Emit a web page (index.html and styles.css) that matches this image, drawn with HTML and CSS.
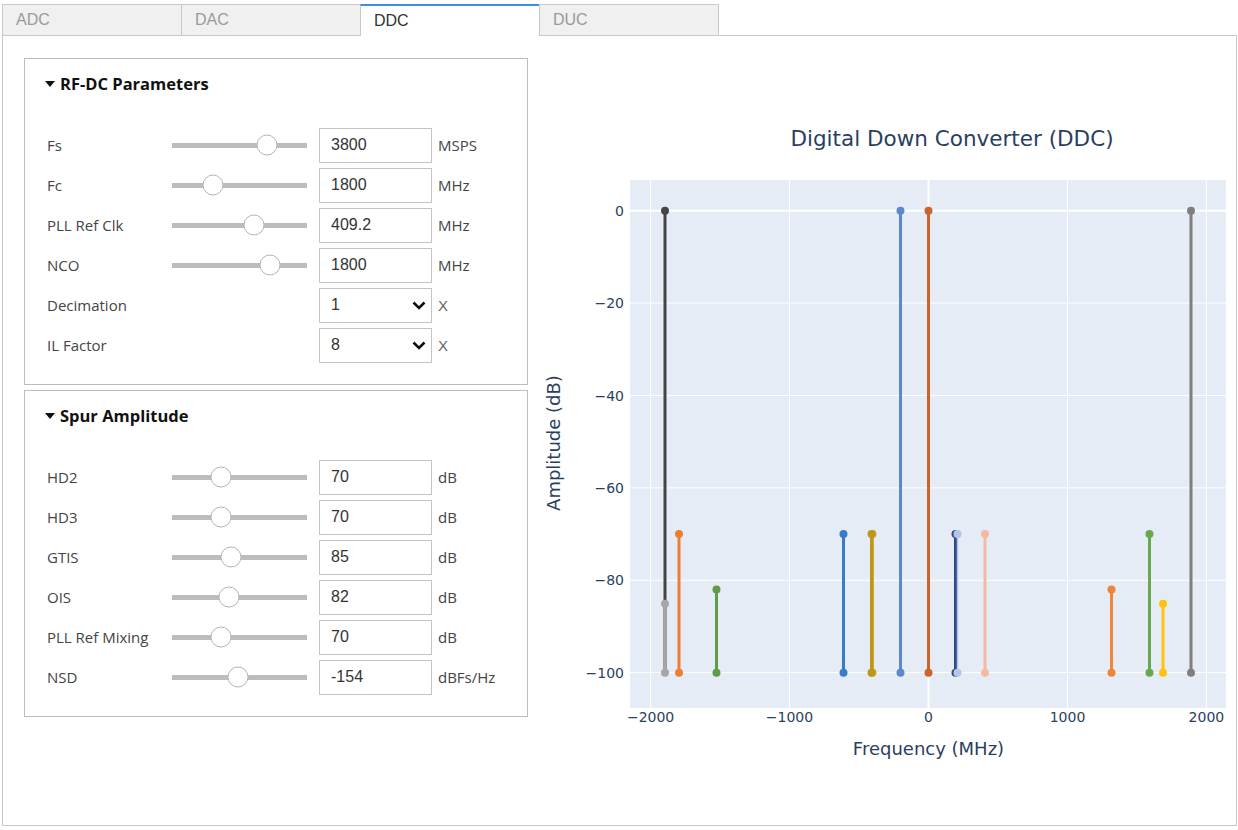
FILE: index.html
```html
<!DOCTYPE html>
<html lang="en">
<head>
<meta charset="utf-8">
<title>DDC</title>
<link rel="stylesheet" href="styles.css">
</head>
<body>
<div class="app">
  <nav class="tabs">
    <div class="tab">ADC</div>
    <div class="tab">DAC</div>
    <div class="tab active">DDC</div>
    <div class="tab">DUC</div>
  </nav>
  <main class="panel">
    <div class="controls">
      <section class="box">
        <h2 class="box-title"><span class="caret"></span>RF-DC Parameters</h2>
        <div class="rows">
          <div class="row"><span class="label">Fs</span><div class="slider"><span class="thumb" style="left:70.4%"></span></div><input class="field" value="3800"><span class="unit">MSPS</span></div>
          <div class="row"><span class="label">Fc</span><div class="slider"><span class="thumb" style="left:30.4%"></span></div><input class="field" value="1800"><span class="unit">MHz</span></div>
          <div class="row"><span class="label">PLL Ref Clk</span><div class="slider"><span class="thumb" style="left:60.7%"></span></div><input class="field" value="409.2"><span class="unit">MHz</span></div>
          <div class="row"><span class="label">NCO</span><div class="slider"><span class="thumb" style="left:72.6%"></span></div><input class="field" value="1800"><span class="unit">MHz</span></div>
          <div class="row"><span class="label">Decimation</span><div class="slider-space"></div><div class="select"><span>1</span><svg class="chev" width="14" height="9" viewBox="0 0 14 9"><polyline points="1.5,1.5 7,7 12.5,1.5" fill="none" stroke="#111" stroke-width="2.6"/></svg></div><span class="unit unit-x">X</span></div>
          <div class="row"><span class="label">IL Factor</span><div class="slider-space"></div><div class="select"><span>8</span><svg class="chev" width="14" height="9" viewBox="0 0 14 9"><polyline points="1.5,1.5 7,7 12.5,1.5" fill="none" stroke="#111" stroke-width="2.6"/></svg></div><span class="unit unit-x">X</span></div>
        </div>
      </section>
      <section class="box">
        <h2 class="box-title"><span class="caret"></span>Spur Amplitude</h2>
        <div class="rows">
          <div class="row"><span class="label">HD2</span><div class="slider"><span class="thumb" style="left:36.3%"></span></div><input class="field" value="70"><span class="unit">dB</span></div>
          <div class="row"><span class="label">HD3</span><div class="slider"><span class="thumb" style="left:36.3%"></span></div><input class="field" value="70"><span class="unit">dB</span></div>
          <div class="row"><span class="label">GTIS</span><div class="slider"><span class="thumb" style="left:43.7%"></span></div><input class="field" value="85"><span class="unit">dB</span></div>
          <div class="row"><span class="label">OIS</span><div class="slider"><span class="thumb" style="left:42.2%"></span></div><input class="field" value="82"><span class="unit">dB</span></div>
          <div class="row"><span class="label">PLL Ref Mixing</span><div class="slider"><span class="thumb" style="left:36.3%"></span></div><input class="field" value="70"><span class="unit">dB</span></div>
          <div class="row"><span class="label">NSD</span><div class="slider"><span class="thumb" style="left:48.9%"></span></div><input class="field" value="-154"><span class="unit">dBFs/Hz</span></div>
        </div>
      </section>
    </div>
    <svg class="chart" width="708" height="789" viewBox="528 36 708 789" xmlns="http://www.w3.org/2000/svg">
      <text class="c-title" x="952" y="138">Digital Down Converter (DDC)</text>
      <rect x="630" y="180" width="596" height="528" fill="#e5ecf6"/>
      <g stroke="#ffffff" stroke-width="1">
        <line x1="650.6" y1="180" x2="650.6" y2="708"/>
        <line x1="789.5" y1="180" x2="789.5" y2="708"/>
        <line x1="1067.5" y1="180" x2="1067.5" y2="708"/>
        <line x1="1206.4" y1="180" x2="1206.4" y2="708"/>
        <line x1="630" y1="303.1" x2="1226" y2="303.1"/>
        <line x1="630" y1="395.5" x2="1226" y2="395.5"/>
        <line x1="630" y1="487.9" x2="1226" y2="487.9"/>
        <line x1="630" y1="580.3" x2="1226" y2="580.3"/>
        <line x1="630" y1="672.7" x2="1226" y2="672.7"/>
      </g>
      <g stroke="#ffffff" stroke-width="2">
        <line x1="928.5" y1="180" x2="928.5" y2="708"/>
        <line x1="630" y1="210.7" x2="1226" y2="210.7"/>
      </g>
      <g class="ytick">
        <text x="624" y="215.7">0</text>
        <text x="624" y="308.1">−20</text>
        <text x="624" y="400.5">−40</text>
        <text x="624" y="492.9">−60</text>
        <text x="624" y="585.3">−80</text>
        <text x="624" y="677.7">−100</text>
      </g>
      <g class="xtick">
        <text x="650.6" y="722">−2000</text>
        <text x="789.5" y="722">−1000</text>
        <text x="928.5" y="722">0</text>
        <text x="1067.5" y="722">1000</text>
        <text x="1206.4" y="722">2000</text>
      </g>
      <text class="axis-title" x="928.5" y="748">Frequency (MHz)</text>
      <text class="axis-title" x="553" y="443" transform="rotate(-90 553 443)">Amplitude (dB)</text>
      <g stroke-width="3">
        <g stroke="#454545" fill="#454545"><line x1="665" y1="210.7" x2="665" y2="672.7"/><circle cx="665" cy="210.7" r="4" stroke="none"/></g>
        <g stroke="#a6a6a6" fill="#a6a6a6"><line x1="665" y1="603.7" x2="665" y2="672.7"/><circle cx="665" cy="603.7" r="4" stroke="none"/><circle cx="665" cy="672.7" r="4" stroke="none"/></g>
        <g stroke="#ed7d31" fill="#ed7d31"><line x1="679" y1="534.1" x2="679" y2="672.7"/><circle cx="679" cy="534.1" r="4" stroke="none"/><circle cx="679" cy="672.7" r="4" stroke="none"/></g>
        <g stroke="#629b45" fill="#629b45"><line x1="716.5" y1="589.5" x2="716.5" y2="672.7"/><circle cx="716.5" cy="589.5" r="4" stroke="none"/><circle cx="716.5" cy="672.7" r="4" stroke="none"/></g>
        <g stroke="#3a7cc4" fill="#3a7cc4"><line x1="843.5" y1="534.1" x2="843.5" y2="672.7"/><circle cx="843.5" cy="534.1" r="4" stroke="none"/><circle cx="843.5" cy="672.7" r="4" stroke="none"/></g>
        <g stroke="#d3aa2e" fill="#d3aa2e"><line x1="872.5" y1="534.1" x2="872.5" y2="672.7"/><circle cx="872.5" cy="534.1" r="4" stroke="none"/><circle cx="872.5" cy="672.7" r="4" stroke="none"/></g>
        <g stroke="#bf961c" fill="#bf961c"><line x1="871.5" y1="534.1" x2="871.5" y2="672.7"/><circle cx="871.5" cy="534.1" r="4" stroke="none"/><circle cx="871.5" cy="672.7" r="4" stroke="none"/></g>
        <g stroke="#5c88cc" fill="#5c88cc"><line x1="900.5" y1="210.7" x2="900.5" y2="672.7"/><circle cx="900.5" cy="210.7" r="4" stroke="none"/><circle cx="900.5" cy="672.7" r="4" stroke="none"/></g>
        <g stroke="#c8652b" fill="#c8652b"><line x1="928.5" y1="210.7" x2="928.5" y2="672.7"/><circle cx="928.5" cy="210.7" r="4" stroke="none"/><circle cx="928.5" cy="672.7" r="4" stroke="none"/></g>
        <g stroke="#2f4b8a" fill="#2f4b8a"><line x1="955.5" y1="534.1" x2="955.5" y2="672.7"/><circle cx="955.5" cy="534.1" r="4" stroke="none"/><circle cx="955.5" cy="672.7" r="4" stroke="none"/></g>
        <g stroke="#b6c5e6" fill="#b6c5e6"><line x1="957.5" y1="534.1" x2="957.5" y2="672.7" stroke-width="1.5"/><circle cx="957.5" cy="534.1" r="4" stroke="none"/><circle cx="957.5" cy="672.7" r="4" stroke="none"/></g>
        <g stroke="#f5b8a0" fill="#f5b8a0"><line x1="985" y1="534.1" x2="985" y2="672.7"/><circle cx="985" cy="534.1" r="4" stroke="none"/><circle cx="985" cy="672.7" r="4" stroke="none"/></g>
        <g stroke="#ee8539" fill="#ee8539"><line x1="1111.5" y1="589.5" x2="1111.5" y2="672.7"/><circle cx="1111.5" cy="589.5" r="4" stroke="none"/><circle cx="1111.5" cy="672.7" r="4" stroke="none"/></g>
        <g stroke="#6aa84f" fill="#6aa84f"><line x1="1149.5" y1="534.1" x2="1149.5" y2="672.7"/><circle cx="1149.5" cy="534.1" r="4" stroke="none"/><circle cx="1149.5" cy="672.7" r="4" stroke="none"/></g>
        <g stroke="#ffc20e" fill="#ffc20e"><line x1="1163" y1="603.7" x2="1163" y2="672.7"/><circle cx="1163" cy="603.7" r="4" stroke="none"/><circle cx="1163" cy="672.7" r="4" stroke="none"/></g>
        <g stroke="#7f7f7f" fill="#7f7f7f"><line x1="1191" y1="210.7" x2="1191" y2="672.7"/><circle cx="1191" cy="210.7" r="4" stroke="none"/><circle cx="1191" cy="672.7" r="4" stroke="none"/></g>
      </g>
    </svg>
  </main>
</div>
</body>
</html>
```
FILE: styles.css
```css
* { box-sizing: border-box; }
body {
  margin: 0;
  background: #ffffff;
  font-family: "Open Sans", "Noto Sans", sans-serif;
  color: #444;
}
.app {
  width: 1238px;
  padding: 4px 1px 0 2px;
}
.tabs {
  display: flex;
  height: 31px;
  position: relative;
  z-index: 1;
}
.tab {
  width: 180px;
  height: 31px;
  margin-right: -1px;
  border: 1px solid #c9c9c9;
  border-bottom: none;
  background: #f0f0f0;
  color: #9a9a9a;
  font-family: "Liberation Sans", Arial, sans-serif;
  font-size: 16px;
  line-height: 30px;
  padding-left: 13px;
}
.tab.active {
  background: #ffffff;
  color: #333;
  border-top: 2px solid #3d8fe0;
  height: 32px;
  line-height: 29px;
}
.panel {
  display: flex;
  height: 791px;
  border: 1px solid #c8c8c8;
}
.controls {
  width: 525px;
  padding: 22px 0 0 21px;
  flex: none;
}
.box {
  width: 504px;
  border: 1px solid #bdbdbd;
  padding: 14px 20px 19px 22px;
}
.box + .box { margin-top: 5px; }
.box-title {
  margin: 0 0 32px -2px;
  height: 20px;
  display: flex;
  align-items: center;
  font-size: 16.5px;
  font-weight: 700;
  color: #111;
}
.caret {
  width: 0;
  height: 0;
  border-left: 5px solid transparent;
  border-right: 5px solid transparent;
  border-top: 6px solid #111;
  margin-right: 5px;
  margin-top: 1px;
}
.row {
  display: flex;
  align-items: center;
  height: 40px;
}
.label {
  width: 125px;
  font-size: 15px;
  color: #444;
}
.slider {
  position: relative;
  width: 135px;
  height: 5px;
  background: #bdbdbd;
}
.slider-space { width: 135px; }
.thumb {
  position: absolute;
  top: 50%;
  width: 21px;
  height: 21px;
  border-radius: 50%;
  background: #fff;
  border: 1px solid #b5b5b5;
  transform: translate(-50%, -50%);
}
.field, .select {
  margin-left: 12px;
  width: 113px;
  height: 35px;
  border: 1px solid #c4c4c4;
  border-radius: 0;
  padding: 0 11px;
  font-family: "Liberation Sans", Arial, sans-serif;
  font-size: 16px;
  color: #333;
  background: #fff;
  outline: none;
}
.select {
  display: flex;
  align-items: center;
  justify-content: space-between;
  padding-right: 5px;
}
.chev { display: block; }
.unit {
  margin-left: 6px;
  font-size: 15px;
  color: #444;
}
.unit-x {
  font-family: "Liberation Sans", Arial, sans-serif;
  color: #666;
}
.chart {
  display: block;
  flex: none;
  font-family: "DejaVu Sans", Verdana, sans-serif;
}
.c-title {
  font-size: 21.5px;
  fill: #2a3f5f;
  text-anchor: middle;
  dominant-baseline: central;
}
.ytick text {
  font-size: 14px;
  fill: #2a3f5f;
  text-anchor: end;
}
.xtick text {
  font-size: 14px;
  fill: #2a3f5f;
  text-anchor: middle;
}
.axis-title {
  font-size: 18px;
  fill: #2a3f5f;
  text-anchor: middle;
  dominant-baseline: central;
}
```
